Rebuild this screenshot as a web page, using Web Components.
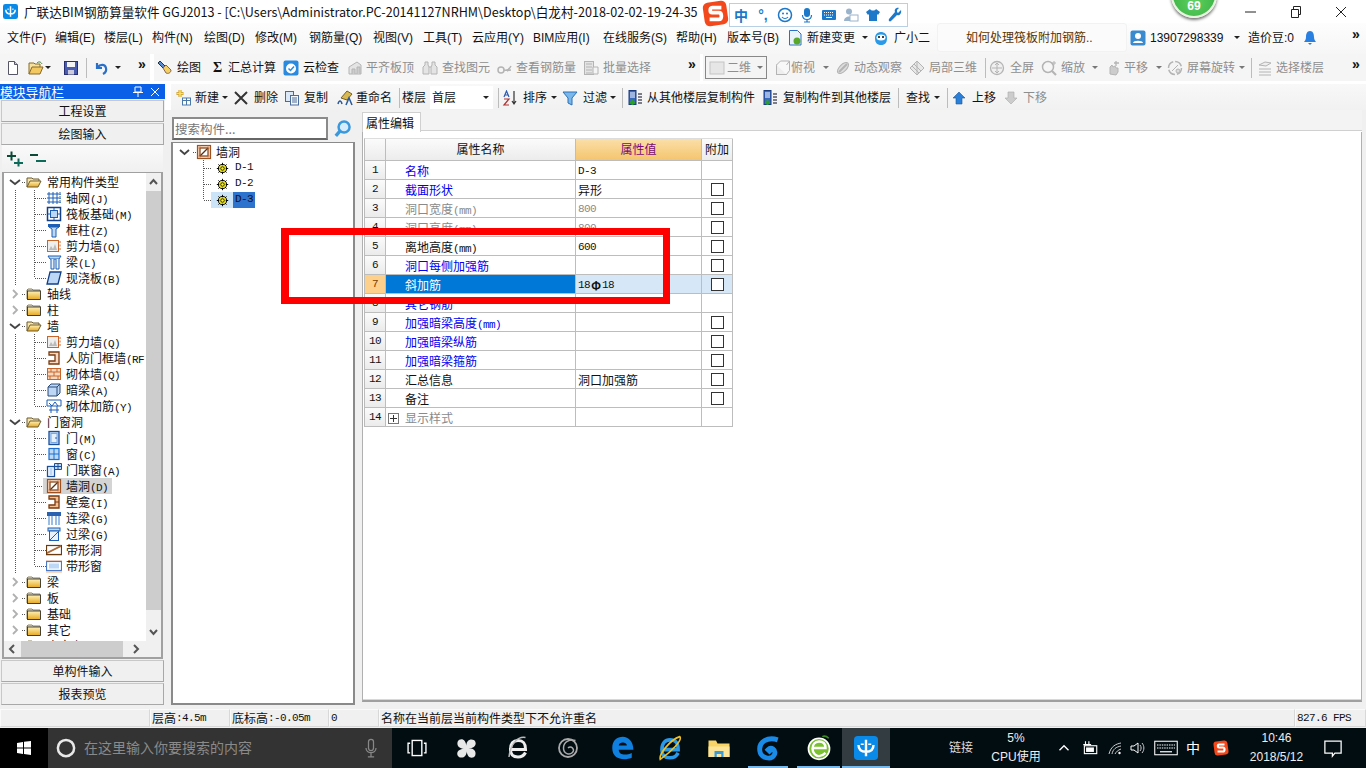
<!DOCTYPE html>
<html lang="zh"><head><meta charset="utf-8"><title>GGJ2013</title>
<style>html,body{margin:0;padding:0;background:#fff;overflow:hidden}</style></head>
<body>
<gl-app>
  <gl-title></gl-title>
  <gl-row name="menu"></gl-row>
  <gl-row name="tools"></gl-row>
  <gl-main>
    <gl-nav slot="nav">
      <gl-navbtn slot="top">工程设置</gl-navbtn>
      <gl-navbtn slot="top">绘图输入</gl-navbtn>
      <gl-navbtn slot="bottom">单构件输入</gl-navbtn>
      <gl-navbtn slot="bottom">报表预览</gl-navbtn>
    </gl-nav>
    <gl-row slot="bar" name="edit"></gl-row>
    <gl-list slot="list"></gl-list>
    <gl-props slot="props"></gl-props>
  </gl-main>
  <gl-status></gl-status>
  <gl-row name="task"></gl-row>
  <gl-overlay slot="over"></gl-overlay>
</gl-app>
<script>
const CJK='"Noto Sans CJK SC","Noto Sans",sans-serif';
const UI='"Liberation Sans","Noto Sans CJK SC",sans-serif';
const SHARED=`.l{font:11px/12px "Liberation Mono",monospace;letter-spacing:-.6px}*{box-sizing:border-box}`;
const m=s=>s.replace(/[\x20-\x7e]+/g,x=>`<span class="l">${x}</span>`);
const fold=(open)=>`<defs><linearGradient id="f" x1="0" y1="0" x2="0" y2="1"><stop offset="0" stop-color="#fff2b8"/><stop offset="1" stop-color="#e8a820"/></linearGradient></defs>`+(open?`<path d="M1 13V4h5l1 1h6v2" fill="#f6e4a8" stroke="#6a5a30"/><path d="M1 13l3-6h11l-3 6z" fill="url(#f)" stroke="#6a5a30"/>`:`<path d="M1 4l1-1h4l1 1h7v9H1z" fill="#e8e0c0" stroke="#8a8060"/><rect x="1.500" y="5" width="13" height="8.500" fill="url(#f)" stroke="#222" stroke-width=".8"/>`);
const B='#1c5fb4',LB='#bcd8f6',OR='#c8662a',LO='#f8d8c0';
const G='#b4b4b4',LG='#e4e4e4';
const I={
 folderOpen:fold(1),folder:fold(0),
 grid:`<path d="M3 2v12M7 2v12M11 2v12M1 4h14M1 8h14M1 12h14" stroke="${B}" fill="none"/><path d="M14 2v12" stroke="${B}" stroke-dasharray="1 1"/>`,
 raft:`<rect x="1.500" y="1.500" width="13" height="13" fill="#fff" stroke="#123f88" stroke-width="1.500"/><rect x="4.500" y="4.500" width="7" height="7" fill="${LB}" stroke="${B}"/><path d="M8 2v3M8 11v3M2 8h3M11 8h3" stroke="${B}"/>`,
 col:`<path d="M2 2h12v3H2z" fill="${B}"/><path d="M3 5h10l-3 2v8H6V7z" fill="${LB}" stroke="${B}"/>`,
 shear:`<rect x="1.500" y="2.500" width="11" height="11" fill="#eee" stroke="${OR}"/><path d="M3 12l2-4 2 3 2-5 2 6z" fill="#bbb"/><path d="M14 3v10" stroke="${OR}" stroke-dasharray="2 1.500"/>`,
 beam:`<path d="M2 2h13l-2 3H4z" fill="${LB}" stroke="${B}"/><path d="M5 5v10h3V5M10 5v10h3V5" fill="#e8f2fc" stroke="${B}"/>`,
 slab:`<path d="M4 2h11l-3 12H1z" fill="${LB}" stroke="#123f88" stroke-width="1.300"/>`,
 rf:`<path d="M3 2h10v12H3v-3h6V5H3z" fill="${LO}" stroke="#7a3a10" stroke-width="1.300"/>`,
 brick:`<rect x="1.500" y="2.500" width="13" height="11" fill="${LO}" stroke="${OR}"/><path d="M1 6h14M1 10h14M5 3v3M11 3v3M8 6v4M4 10v4M12 10v4" stroke="${OR}" fill="none"/>`,
 hidden:`<path d="M2 5l3-3h9v9l-3 3H2z" fill="${LB}" stroke="#2a4a78"/><path d="M2 5h9v9M11 5l3-3" fill="none" stroke="#2a4a78"/>`,
 rein:`<path d="M1 2h14v6H1z" fill="#fff" stroke="${B}"/><path d="M3 5l3 3 3-4 3 4" stroke="${B}" fill="none"/><path d="M5 8v7M11 8v7M3 12h10" stroke="${B}"/>`,
 door:`<rect x="3" y="1.500" width="10" height="13" fill="${LB}" stroke="#1b4f9c" stroke-width="1.300"/><rect x="5" y="3.500" width="6" height="9" fill="#e6f0fb" stroke="#7aa8e0"/><circle cx="10" cy="8" r=".8" fill="#1b4f9c"/>`,
 win:`<rect x="3" y="2.500" width="10" height="11" fill="${LB}" stroke="#1b6fd0" stroke-width="1.200"/><path d="M8 3v10M3 8h10" stroke="#1b6fd0"/>`,
 doorwin:`<rect x="1.500" y="4.500" width="7" height="10" fill="#fff" stroke="#1b4f9c" stroke-width="1.300"/><rect x="3.500" y="6" width="3" height="7" fill="${LB}"/><path d="M8.500 1.500h7v6h-7z" fill="${LB}" stroke="#1b4f9c"/><path d="M12 2v5M9 4.500h6" stroke="#1b4f9c"/>`,
 hole:`<rect x="1.500" y="1.500" width="13" height="13" fill="${LO}" stroke="#9a5020" stroke-width="1.200"/><rect x="4" y="4" width="8" height="8" fill="#fff" stroke="#5a3010"/><path d="M4 12l8-8" stroke="#5a3010" stroke-width="1.200"/><path d="M4 1v14M12 1v14M1 4h14M1 12h14" stroke="${OR}" stroke-width=".5"/>`,
 niche:`<path d="M3 2h10v12H3v-3h6V5H3z" fill="#f6c090" stroke="#7a3a10" stroke-width="1.300"/><path d="M9 8h4" stroke="#7a3a10"/>`,
 lintel:`<rect x="1" y="2" width="14" height="4" fill="#2a62b0"/><path d="M3 6v9M6 6v9M10 6v9M13 6v9" stroke="#7aa8e0" stroke-width="1.500"/>`,
 over:`<rect x="2" y="2" width="12" height="3" fill="${LB}" stroke="${B}"/><rect x="3.500" y="5" width="9" height="9.500" fill="#e8f2fc" stroke="${B}"/><path d="M4 14l8-8" stroke="${B}"/>`,
 strip:`<rect x="0" y="3" width="16" height="11" fill="${LO}"/><rect x=".5" y="3.500" width="15" height="9" fill="#fff" stroke="#6a3a10" stroke-width="1.200"/><path d="M1 12l14-7v-2L1 10z" fill="#a56a3a"/>`,
 stripw:`<rect x="0" y="2" width="16" height="13" fill="${LO}"/><rect x=".5" y="3.500" width="15" height="9" fill="#fff" stroke="#4a7ac8" stroke-width="1.200"/><rect x="3" y="5.500" width="10" height="5" fill="${LB}"/>`,
 gear:`<circle cx="8" cy="8" r="5" fill="#f8f020" stroke="#000" stroke-width="1.200"/><circle cx="8" cy="8" r="2.200" fill="#f8f020" stroke="#000"/><path d="M8 1v3M8 12v3M1 8h3M12 8h3M3 3l2 2M11 11l2 2M13 3l-2 2M5 11l-2 2" stroke="#000" stroke-width="1.200"/>`,
 search:`<circle cx="9.500" cy="6.500" r="4" fill="#d4ecfc" stroke="#3a98dc" stroke-width="1.800"/><path d="M6.500 9.500l-3 3.500" stroke="#3a98dc" stroke-width="2.400"/>`,
 plusplus:`<path d="M0 5h9M4.500 .5v9" stroke="#0c4a38" stroke-width="2"/><path d="M7 12h9M11.500 7.500v8" stroke="#0c6a58" stroke-width="2"/>`,
 minmin:`<path d="M0 4h8" stroke="#0c4a38" stroke-width="2"/><path d="M6 10h10" stroke="#0c6a58" stroke-width="2"/>`,
 new:`<path d="M3.500 1.500h6l3 3v10h-9z" fill="#fff" stroke="#556"/><path d="M9.500 1.500v3h3" fill="#ccd" stroke="#556"/>`,
 open:`<path d="M1 14V3h5l1 1h5v3" fill="#f6e0a0" stroke="#8a6a20"/><path d="M1 14l3-7h11l-3 7z" fill="#f4c860" stroke="#8a6a20"/><path d="M9 3c2-2 4-1 5 1" fill="none" stroke="#3a7a3a"/>`,
 save:`<rect x="1.500" y="1.500" width="13" height="13" fill="#4a5cb0" stroke="#263070"/><rect x="4" y="2" width="8" height="5" fill="#f4f4f4"/><rect x="5" y="10" width="6" height="4.500" fill="#ccd"/>`,
 undo:`<path d="M4 3v5h5M4.500 7.500C7 4 12 4 13 8c.6 2.500-1 5-3 6" fill="none" stroke="#2a70c8" stroke-width="2.200"/>`,
 brush:`<path d="M3 1l5 5-2 2-5-5z" fill="#5a8ad0" stroke="#234"/><path d="M6 8l3-3 5 5c0 3-3 4-5 3z" fill="#f4d060" stroke="#865"/>`,
 cloud:`<rect x=".5" y=".5" width="15" height="15" rx="2" fill="#2a8ae0"/><circle cx="8" cy="8.500" r="5" fill="#fff"/><path d="M5.500 8.500l2 2 3.500-4" fill="none" stroke="#2a8ae0" stroke-width="1.500"/>`,
 g1:`<path d="M2 14V7l8-5 4 3v9z" fill="${LG}" stroke="${G}"/><path d="M5 14V9h3v5M10 14V7h3v7" fill="#ccc" stroke="${G}"/>`,
 g2:`<path d="M3 2h3v3l1 2v7H1V7l2-2zM10 2h3v3l2 2v7H9V7l1-2z" fill="${LG}" stroke="${G}"/><path d="M7 7h2" stroke="${G}"/>`,
 g3:`<circle cx="4" cy="10" r="3" fill="none" stroke="${G}" stroke-width="1.500"/><path d="M7 10c3 1 5 0 7-4M10 11c2-1 4-1 4-1" fill="none" stroke="${G}" stroke-width="1.500"/>`,
 g4:`<rect x="1.500" y="1.500" width="9" height="13" fill="${LG}" stroke="${G}"/><path d="M3 4h6M3 7h6M3 10h6M3 13h6" stroke="${G}"/><path d="M10 7h5v7h-5z" fill="#f4f4f4" stroke="${G}"/>`,
 g5:`<rect x="1.500" y="5" width="10" height="9.500" fill="#eee" stroke="${G}"/><path d="M1.500 5l4-4h9v9.500l-3 4M11.500 5l3-4" fill="#f8f8f8" stroke="${G}"/>`,
 g6:`<ellipse cx="8" cy="8" rx="7" ry="3.500" transform="rotate(-45 8 8)" fill="#ddd" stroke="${G}"/><path d="M4 12l8-8" stroke="${G}" stroke-width="2"/>`,
 g7:`<path d="M8 1l7 7-7 7-7-7z" fill="#e8e8e8" stroke="${G}"/><path d="M5 4l7 7M8 1v14M3 6l7 7" stroke="${G}"/>`,
 g8:`<circle cx="8" cy="8" r="6.500" fill="#f0f0f0" stroke="${G}" stroke-width="1.300"/><path d="M8 3v10M3 8h10M8 3l-2 2M8 3l2 2M8 13l-2-2M8 13l2-2" fill="none" stroke="${G}"/>`,
 g9:`<circle cx="7" cy="7" r="5.500" fill="#f6f6f6" stroke="${G}" stroke-width="1.500"/><path d="M11 11l4 4" stroke="${G}" stroke-width="2.200"/><path d="M13 1v4M11 3h4" stroke="${G}"/>`,
 g10:`<path d="M5 14V7l2-2 1 2 2-1 1 2 2 0v4l-2 3z" fill="#ccc" stroke="${G}"/><path d="M11 1v5M9 3h5" stroke="${G}" stroke-width="1.300"/>`,
 g11:`<circle cx="8" cy="8" r="6.500" fill="#f4f4f4" stroke="${G}" stroke-width="1.500" stroke-dasharray="8 2"/><path d="M5 11l6-6" stroke="${G}"/><circle cx="11" cy="11" r="2" fill="#ddd" stroke="${G}"/>`,
 g12:`<path d="M2 5l6-3 6 1-5 3zM2 9h12M2 12h12M2 15h12" fill="#eee" stroke="${G}"/>`,
 combo2d:`<rect x="1" y="2" width="14" height="12" fill="#e6e6e6" stroke="#c4c4c4"/>`,
 newb:`<path d="M5 0v7M1.500 3.500h7" stroke="#c89820" stroke-width="3"/><path d="M5 0v7M1.500 3.500h7" stroke="#f8e070" stroke-width="1.500"/><rect x="7.500" y="8" width="8" height="7" fill="#fff" stroke="#4a78a8"/><path d="M7.500 10.500h8M11.500 8v7" stroke="#4a78a8"/>`,
 del:`<path d="M2 2l12 12M14 2L2 14" stroke="#333" stroke-width="2"/>`,
 copy:`<rect x="1.500" y="1.500" width="8" height="10" fill="#dce8f6" stroke="#4a6a9a"/><rect x="6.500" y="5.500" width="8" height="9.500" fill="#f4f8fc" stroke="#4a6a9a"/><path d="M8 8h5M8 10h5M8 12h5" stroke="#4a6a9a"/>`,
 rename:`<path d="M4 8l6-7 5 3-5 6z" fill="#d8b850" stroke="#786020"/><path d="M1 14c1-4 3-4 4 0M9 15l3-7 3 7" fill="none" stroke="#2a5a9a" stroke-width="1.500"/>`,
 sort:`<path d="M12 1v13M10 11l2 3 2-3" fill="none" stroke="#333" stroke-width="1.200"/><path d="M2 7l2.500-6L7 7M3 5h3" fill="none" stroke="#2a5ab0" stroke-width="1.200"/><path d="M2 9h5l-5 6h5" fill="none" stroke="#b03030" stroke-width="1.200"/>`,
 funnel:`<path d="M1 2h14l-5 6v7l-4-2V8z" fill="#7ab8ec" stroke="#2a70b8"/>`,
 cpy1:`<rect x="2" y="0.500" width="7" height="14" fill="#3a6ac0" stroke="#1a3a80"/><path d="M3 3h5M3 5h5M3 7h5" stroke="#fff"/><path d="M11 4h4M11 7h4M11 10h4M11 13h4" stroke="#556" stroke-width="1.500"/><path d="M5.500 10v5M3 12.500h5" stroke="#2aa02a" stroke-width="2"/>`,
 up:`<path d="M8 2l6 6h-3v6H5V8H2z" fill="#2a80d8" stroke="#1a58a0" stroke-width=".6"/>`,
 down:`<path d="M8 14l6-6h-3V2H5v6H2z" fill="#ccc" stroke="#aaa" stroke-width=".6"/>`,
 doc:`<path d="M2.500 .5h8l3.500 3.500v11H2.500z" fill="#eaf3fc" stroke="#2a70c8"/><circle cx="10" cy="11" r="3.500" fill="#5aa82a"/>`,
 bot:`<path d="M2 8c0-8 12-8 12 0 0 6-3 7-6 7s-6-1-6-7z" fill="#2a9ae8"/><ellipse cx="8" cy="7.500" rx="4.500" ry="3" fill="#fff"/><circle cx="6" cy="7" r="1" fill="#000"/><circle cx="10" cy="7" r="1" fill="#000"/>`,
 user:`<rect x=".5" y=".5" width="15" height="15" rx="2" fill="#3a8ad0"/><circle cx="8" cy="6" r="3" fill="#fff"/><path d="M3 13c0-3 10-3 10 0z" fill="#fff"/>`,
 bell:`<path d="M8 1c3 0 4 3 4 6 0 2 1 4 2 5H2c1-1 2-3 2-5 0-3 1-6 4-6z" fill="#2a80e0"/><path d="M6 13h4l-2 2z" fill="#2a80e0"/>`,
 winlogo:`<path d="M1 3l6-1v5.500H1zM8 1.800L15 1v6.500H8zM1 8.500h6V14l-6-1zM8 8.500h7V15l-7-1z" fill="#fff"/>`,
 cortana:`<circle cx="8" cy="8" r="6.500" fill="none" stroke="#e8e8e8" stroke-width="2"/>`,
 mic:`<rect x="6" y="1" width="4" height="9" rx="2" fill="none" stroke="#888"/><path d="M4 8c0 5 8 5 8 0M8 12v3M5.500 15h5" fill="none" stroke="#888"/>`,
 taskview:`<rect x="4.500" y="2.500" width="7" height="11" fill="none" stroke="#fff"/><path d="M3 4.500H1.500v7H3M13 4.500h1.500v7H13" fill="none" stroke="#fff"/>`,
 pin:`<path d="M8 8C2 9 1 5 2 3s6-3 6 5zM8 8c-1-6 3-7 5-6s3 6-5 6zM8 8c6-1 7 3 6 5s-6 3-6-5zM8 8c1 6-3 7-5 6S0 8 8 8z" fill="#e8e8e8"/>`,
 ie1:`<path d="M2 9h11c0-5-2-6-5-6S3 5 3 9s2 5 5 5 4-1 5-3" fill="none" stroke="#eee" stroke-width="2"/><path d="M13 1c-5-1-10 4-11 13" fill="none" stroke="#bbb"/>`,
 swirl:`<circle cx="8" cy="8" r="6" fill="none" stroke="#aaa" stroke-width="1.200"/><path d="M13 3c-4-1-8 1-8 5s4 5 6 3-1-5-3-3" fill="none" stroke="#aaa"/>`,
 edge:`<path d="M2 8c0-5 3-7 6.500-7S15 4 15 9H6c0 3 4 4 8 2v3c-5 2-12 1-12-6zM6 6.500h5C11 4 6 4 6 6.500z" fill="#1080e0"/>`,
 ie:`<path d="M2 9h11c0-5-2-6-5-6S3 5 3 9s2 5 5 5 4-1 5-3" fill="none" stroke="#2a9ae8" stroke-width="2.200"/><path d="M14 1c2 2-5 9-12 14-1-3 6-12 12-14z" fill="none" stroke="#f0c020"/>`,
 fold:`<path d="M1 3h5l1 2h8v9H1z" fill="#f8d468"/><path d="M1 7h14v7H1z" fill="#fce49a"/><path d="M5 14v-4h6v4h-1.500v-2h-3v2z" fill="#3a9ad8"/>`,
 gapp:`<path d="M14 3C8 1 2 4 3 10c.5 4 7 6 9 2 1-3-2-5-4-3l2 2" fill="none" stroke="#1a8ae8" stroke-width="3"/>`,
 gie:`<circle cx="8" cy="8.500" r="6.500" fill="#7ac030" stroke="#fff"/><path d="M4 8h8c0-3-1.500-4-4-4s-4 2-4 4.500S6 13 8 13s3-1 4-2" fill="none" stroke="#fff" stroke-width="1.500"/><path d="M10 1c2-1 3 0 4 1" stroke="#3a8a20" fill="none"/>`,
 glad:`<rect x="0" y="0" width="16" height="16" rx="2.500" fill="#0a8ae8"/><path d="M8 2.500v11M3 6c0 3.500 2.500 4.500 5 4.500s5-1 5-4.500" fill="none" stroke="#fff" stroke-width="1.600"/><path d="M4.500 5.500h2M9.500 5.500h2" stroke="#fff"/>`,
 chev:`<path d="M4 10l4-4 4 4" fill="none" stroke="#fff" stroke-width="1.200"/>`,
 batt:`<rect x="3" y="6" width="11" height="7" fill="none" stroke="#fff"/><rect x="4.500" y="7.500" width="7" height="4" fill="#fff"/><path d="M4 5V2M7 5V2M2 5h7" stroke="#fff"/>`,
 wifi:`<path d="M2 14c2-8 7-10 12-11M5 14c1-5 4-7 9-8M8 14c1-2 3-4 6-5" fill="none" stroke="#ccc"/><circle cx="12.500" cy="13" r="1.200" fill="#fff"/>`,
 sound:`<path d="M2 6h3l4-3v10l-4-3H2z" fill="none" stroke="#fff"/><path d="M11 5c1.500 2 1.500 4 0 6M13 3c2.500 3 2.500 7 0 10" fill="none" stroke="#ccc"/>`,
 kbd:`<rect x=".5" y="3.500" width="15" height="9" fill="none" stroke="#fff" stroke-width=".7"/><path d="M2 6h12M2 8h12" stroke="#fff" stroke-dasharray="1 .6" stroke-width=".8"/><path d="M4 10.500h8" stroke="#fff" stroke-width=".8"/>`,
 sogou:`<rect x="1" y="1" width="14" height="14" rx="3" fill="#f2481c" transform="rotate(-8 8 8)"/><path d="M11.500 4.500H6C4.500 4.500 4.500 7.500 6 7.500h4c2 0 2 4 0 4H4.500" fill="none" stroke="#fff" stroke-width="2.200"/>`,
 notif:`<path d="M1.500 2.500h13v9.500H9.500L7.500 14.500V12H1.500z" fill="none" stroke="#fff"/>`,
 smile:`<circle cx="8" cy="8" r="6.500" fill="none" stroke="#1c78c8" stroke-width="1.500"/><circle cx="6" cy="6.500" r="1" fill="#1c78c8"/><circle cx="10" cy="6.500" r="1" fill="#1c78c8"/><path d="M5 10c1.500 2 4.500 2 6 0" fill="none" stroke="#1c78c8" stroke-width="1.200"/>`,
 micb:`<rect x="5" y="1" width="6" height="9" rx="3" fill="#1c78c8"/><path d="M3.500 8c0 6 9 6 9 0M8 12.500V15M5 15h6" fill="none" stroke="#1c78c8" stroke-width="1.200"/>`,
 kbb:`<rect x="1" y="3" width="14" height="10" rx="1" fill="#1c78c8"/><path d="M3 5.500h10M3 8h10" stroke="#fff" stroke-dasharray="1 1"/><path d="M5 10.500h6" stroke="#fff"/>`,
 pers:`<circle cx="6" cy="4.500" r="3" fill="#9ab4cc"/><path d="M1 14c0-6 10-6 10 0z" fill="#9ab4cc"/><rect x="7" y="8" width="8" height="6" fill="#fff" stroke="#9ab4cc"/>`,
 shirt:`<path d="M5 2L1 5l2 3 1-1v7h8V7l1 1 2-3-4-3c-1 2-5 2-6 0z" fill="#1c78c8"/>`,
 wrench:`<path d="M14 3l-3 3-1-1 0-2 2-2c-3-1-5 2-4 4L2 12c-1 2 1 3 2 2l6-6c2 1 5-1 4-5z" fill="#1c78c8"/>`,
 restore:`<path d="M3.500 5.500h7v8h-7zM5.500 5.500v-3h7v8h-2" fill="none" stroke="#222"/>`,
 closex:`<path d="M3 3l10 10M13 3L3 13" stroke="#222"/>`,
 minus:`<path d="M2 8h11" stroke="#222"/>`,
};
class Base extends HTMLElement{
  shadow(html){if(!this.shadowRoot)this.attachShadow({mode:'open'});this.shadowRoot.innerHTML=html;}
}
class GlIcon extends Base{connectedCallback(){const s=this.getAttribute('s')||16;
  this.shadow(`<style>:host{display:inline-flex;flex:none;width:${s}px;height:${s}px}svg{display:block}</style><svg viewBox="0 0 16 16" width="${s}" height="${s}">${I[this.getAttribute('n')]||''}</svg>`);}}
customElements.define('gl-icon',GlIcon);
const ic=(n,s=16)=>`<gl-icon n="${n}" s="${s}"></gl-icon>`;

const ROWS={
 menu:{h:31,pb:2,base:0,bg:'linear-gradient(#fdfdfd,#f6f6f6)',items:[
  [7,'t','文件(F)'],[55,'t','编辑(E)'],[104,'t','楼层(L)'],[152,'t','构件(N)'],[204,'t','绘图(D)'],[255,'t','修改(M)'],[309,'t','钢筋量(Q)'],[373,'t','视图(V)'],[423,'t','工具(T)'],[472,'t','云应用(Y)'],[533,'t','BIM应用(I)'],[603,'t','在线服务(S)'],[676,'t','帮助(H)'],[727,'t','版本号(B)'],
  [787,'i','doc'],[807,'t','新建变更'],[861,'a'],[873,'i','bot'],[894,'t','广小二'],
  [937,'t','如何处理筏板附加钢筋..',{st:'background:#fbfbfb;color:#5a3200;padding-left:28px;border-radius:3px;border:1px solid #f2f2f2'}],
  [1127,'t','',{w:4}],[1130,'i','user'],[1150,'t','13907298339'],[1233,'a'],[1248,'t','造价豆:0'],[1302,'i','bell'],[1352,'m']]},
 tools:{h:27,base:0,mb:3,bg:'linear-gradient(90deg,#f5f5f5 150px,#fff 150px 154px,#f5f5f5 154px 700px,#fff 700px 703px,#f5f5f5 703px)',items:[
  [5,'i','new'],[28,'i','open'],[44,'a'],[63,'i','save'],[85,'s'],[93,'i','undo'],[114,'a'],[138,'m'],
  [157,'i','brush'],[177,'t','绘图'],[210,'tb','Σ'],[228,'t','汇总计算'],[283,'i','cloud'],[303,'t','云检查'],
  [347,'i','g1'],[366,'tg','平齐板顶'],[422,'i','g2'],[442,'tg','查找图元'],[497,'i','g3'],[516,'tg','查看钢筋量'],[583,'i','g4'],[603,'tg','批量选择'],[688,'m'],
  [705,'c','二维'],[775,'i','g5'],[791,'tg','俯视'],[822,'ag'],[835,'i','g6'],[854,'tg','动态观察'],[909,'i','g7'],[929,'tg','局部三维'],[984,'s'],
  [989,'i','g8'],[1010,'tg','全屏'],[1041,'i','g9'],[1061,'tg','缩放'],[1091,'ag'],[1105,'i','g10'],[1124,'tg','平移'],[1155,'ag'],[1167,'i','g11'],[1187,'tg','屏幕旋转'],[1238,'ag'],[1250,'s'],[1257,'i','g12'],[1276,'tg','选择楼层'],[1352,'m']]},
 edit:{h:26,pt:1,base:171,bg:'linear-gradient(#f8f8f8,#f1f1f1)',items:[
  [175,'i','newb'],[195,'t','新建'],[221,'a'],[233,'i','del'],[254,'t','删除'],[284,'i','copy'],[304,'t','复制'],[337,'i','rename'],[356,'t','重命名'],[398,'s'],[402,'t','楼层'],
  [430,'k','首层'],[497,'s'],[502,'i','sort'],[523,'t','排序'],[550,'a'],[562,'i','funnel'],[583,'t','过滤'],[609,'a'],[621,'s'],[627,'i','cpy1'],[647,'t','从其他楼层复制构件'],[762,'i','cpy1'],[783,'t','复制构件到其他楼层'],[897,'s'],[906,'t','查找'],[933,'a'],[946,'s'],[951,'i','up'],[972,'t','上移'],[1003,'i','down'],[1023,'tg','下移']]},
 task:{h:40,base:0,bg:'#020d12',color:'#fff',items:[
  [0,'ic','winlogo',{s:16,st:'background:#000;justify-content:center'}],
  [48,'ic','cortana',{s:20,st:'background:#333;padding-left:8px'}],
  [84,'t','在这里输入你要搜索的内容',{st:'background:#333;color:#8a8a8a;font-size:14px'}],
  [361,'ic','mic',{s:20,st:'background:#333'}],
  [392,'f'],[406,'ic','taskview',{s:22}],[455,'ic','pin',{s:23}],[506,'ic','ie1',{s:24}],[556,'ic','swirl',{s:24}],[609,'ic','edge',{s:26}],[657,'ic','ie',{s:26}],[707,'ic','fold',{s:24}],
  [748,'ic','gapp',{s:26,st:'justify-content:center;box-shadow:inset 0 -2px #76b9ed'}],[788,'f'],
  [797,'ic','gie',{s:26,st:'justify-content:center;box-shadow:inset 0 -2px #76b9ed'}],[840,'f'],
  [842,'ic','glad',{s:24,st:'justify-content:center;background:#333c40;box-shadow:inset 0 -2px #76b9ed'}],
  [890,'f'],[949,'t','链接',{st:'color:#ddd'}],[985,'two','5%|CPU使用',{}],[1047,'f'],
  [1055,'ic','chev',{s:18}],[1081,'ic','batt',{s:18}],[1107,'ic','wifi',{s:16}],[1129,'ic','sound',{s:16}],[1154,'ic','kbd',{s:24}],[1186,'t','中',{st:'font-size:14px'}],[1213,'ic','sogou',{s:16}],
  [1235,'two','10:46|2018/5/12',{}],[1318,'ic','notif',{s:20,st:'padding-left:5px'}]]}
};
class GlRow extends Base{connectedCallback(){
  const d=ROWS[this.getAttribute('name')];
  const it=d.items;let h='';
  it.forEach((c,i)=>{
    const[x,k,v,o={}]=c;const nx=i+1<it.length?it[i+1][0]:1366;const w=nx-x;
    let inner='',cl='cell';
    if(k==='t')inner=`<span>${v}</span>`;
    if(k==='tg'){inner=`<span>${v}</span>`;cl+=' gray';}
    if(k==='tb'){inner=`<span style="font:bold 14px 'Liberation Serif',serif;margin-left:3px">${v}</span>`;}
    if(k==='i')inner=ic(v);
    if(k==='ic')inner=ic(v,o.s);
    if(k==='a')inner=`<span class="arr"></span>`;
    if(k==='ag')inner=`<span class="arr g"></span>`;
    if(k==='s')inner=`<span class="sep"></span>`;
    if(k==='m')inner=`<span class="more">»</span>`;
    if(k==='c')inner=`<span class="combo">${ic('combo2d')}<span>${v}</span><span class="arr g" style="margin-left:auto"></span></span>`;
    if(k==='k')inner=`<span class="kcombo"><span>${v}</span><span class="arr" style="margin-left:auto"></span></span>`;
    if(k==='two'){const[a,b]=v.split('|');inner=`<span class="two"><span>${a}</span><span>${b}</span></span>`;}
    h+=`<div class="${cl}" style="width:${w}px;${o.st||''}">${inner}</div>`;
  });
  this.shadow(`<style>${SHARED}
  :host{display:flex;flex:none;height:${d.h}px;box-sizing:border-box;margin-bottom:${d.mb||0}px;background:${d.bg};color:${d.color||'#111'};font:12px/16px ${UI};padding:${d.pt||0}px 0 ${d.pb||0}px ${it[0][0]-d.base}px;overflow:hidden}
  .cell{flex:none;height:100%;display:flex;align-items:center;white-space:nowrap}
  .gray{color:#8e8e8e}
  .arr{width:0;height:0;border:3px solid transparent;border-top:3px solid #222;border-bottom:0;margin-left:1px}
  .arr.g{border-top-color:#777}
  .sep{width:1px;height:20px;background:#bcbcbc;margin-left:1px}
  .more{font:bold 14px/14px "Liberation Sans",sans-serif;margin-top:-8px}
  .combo{width:62px;height:23px;border:1px solid #888;display:flex;align-items:center;gap:2px;color:#8e8e8e;padding:0 3px;background:#f4f4f4}
  .kcombo{width:63px;height:23px;display:flex;align-items:center;background:#fff;padding:0 4px 0 2px}
  .two{display:flex;flex-direction:column;width:100%;align-items:center;gap:4px;line-height:15px;color:#eee}
  </style>${h}`);
}}
customElements.define('gl-row',GlRow);

class GlApp extends Base{connectedCallback(){
  this.shadow(`<style>:host{display:flex;flex-direction:column;width:1366px;height:768px;position:relative;overflow:hidden;background:#fff;font:12px/16px ${CJK};color:#111}</style><slot></slot><slot name="over"></slot>`);
}}
customElements.define('gl-app',GlApp);

class GlTitle extends Base{connectedCallback(){
  this.shadow(`<style>:host{display:flex;flex:none;height:23px;align-items:center;background:#fff;font:12.600px/16px ${CJK};color:#111}
  .t{flex:none;width:1240px;white-space:nowrap;margin-left:3px;display:flex;gap:6px;align-items:center}
  .c{flex:none;width:41px;display:flex;justify-content:center}</style>
  <div class="t">${ic('glad',15)}<span>广联达BIM钢筋算量软件 GGJ2013 - [C:\\Users\\Administrator.PC-20141127NRHM\\Desktop\\白龙村-2018-02-02-19-24-35</span></div>
  <div class="c" style="margin-left:-13px">${ic('minus')}</div><div class="c" style="margin-left:4px">${ic('restore')}</div><div class="c" style="margin-left:4px">${ic('closex')}</div>`);
}}
customElements.define('gl-title',GlTitle);

class GlMain extends Base{connectedCallback(){
  this.shadow(`<style>:host{display:grid;flex:none;height:624px;grid-template-columns:165px 6px 184px 7px 1000px 4px;grid-template-rows:26px 1fr;background:#f0f0f0}
  ::slotted([slot=nav]){grid-row:1/3;grid-column:1}
  ::slotted([slot=bar]){grid-row:1;grid-column:3/7;}
  ::slotted([slot=list]){grid-row:2;grid-column:3}
  ::slotted([slot=props]){grid-row:2;grid-column:5}
  .w{grid-row:1;grid-column:2;background:#fff}
  </style><div class="w"></div><slot name="nav"></slot><slot name="bar"></slot><slot name="list"></slot><slot name="props"></slot>`);
}}
customElements.define('gl-main',GlMain);

class GlNavBtn extends Base{connectedCallback(){
  this.shadow(`<style>:host{display:flex;box-sizing:border-box;align-items:center;justify-content:center;height:22px;margin:0 1px 1px;background:#f0f0f0;border:1px solid #a8a8a8;border-top-color:#c8c8c8;border-left-color:#c8c8c8;font:12px/16px ${CJK};color:#111}</style><slot></slot>`);
}}
customElements.define('gl-navbtn',GlNavBtn);

const NAV=[
 [0,'o','folderOpen','常用构件类型',1],[1,'','grid','轴网(J)',1],[1,'','raft','筏板基础(M)',1],[1,'','col','框柱(Z)',1],[1,'','shear','剪力墙(Q)',1],[1,'','beam','梁(L)',1],[1,'e','slab','现浇板(B)',0],
 [0,'c','folder','轴线'],[0,'c','folder','柱'],
 [0,'o','folderOpen','墙',1],[1,'','shear','剪力墙(Q)',1],[1,'','rf','人防门框墙(RF',1],[1,'','brick','砌体墙(Q)',1],[1,'','hidden','暗梁(A)',1],[1,'e','rein','砌体加筋(Y)',0],
 [0,'o','folderOpen','门窗洞',1],[1,'','door','门(M)',1],[1,'','win','窗(C)',1],[1,'','doorwin','门联窗(A)',1],[1,'','hole','墙洞(D)',1,1],[1,'','niche','壁龛(I)',1],[1,'','lintel','连梁(G)',1],[1,'','over','过梁(G)',1],[1,'','strip','带形洞',1],[1,'e','stripw','带形窗',0],
 [0,'c','folder','梁'],[0,'c','folder','板'],[0,'c','folder','基础'],[0,'c','folder','其它'],[0,'c','folder','自定义']];
const dash='stroke="#555" stroke-dasharray="1 1" fill="none"';
const chev=k=>k==='o'?`<path d="M10 6l5 4 5-4" fill="none" stroke="#444" stroke-width="1.800"/>`:`<path d="M13 4l4 4-4 4" fill="none" stroke="#b0b0b0" stroke-width="1.800"/>`;
function navRow(r){
  const[l,k,i,t,more,sel]=r;
  let svg;
  if(l===0)svg=`<svg width="26" height="16">${chev(k)}<path d="M22 8.500h4" ${dash}/></svg>`;
  else svg=`<svg width="46" height="16"><path d="M15.500 0v16" ${dash}/><path d="M34.500 0v${k==='e'?8:16}M35 8.500h11" ${dash}/></svg>`;
  return `<div class="row">${svg}<span class="ico ${sel?'sel':''}">${ic(i)}</span><span class="tx ${sel?'sel':''}" style="margin-left:${l?(sel?0:3):4}px">${m(t)}</span></div>`;
}
class GlNav extends Base{connectedCallback(){
  this.shadow(`<style>${SHARED}
  :host{display:flex;flex-direction:column;height:624px;background:#f0f0f0;overflow:hidden;font:12px/16px ${CJK};color:#111}
  .hd{height:15px;flex:none;background:#0a60e6;color:#fff;display:flex;align-items:center;margin-bottom:1px}
  .hd b{font-weight:400;flex:1;white-space:nowrap;font-size:12.800px;line-height:15px}
  .top{flex:none;height:45px}
  .tool{flex:none;height:27px;margin:0 2px;background:linear-gradient(#fafafa,#f0f0f0);display:flex;align-items:center;padding:0 0 0 5px;gap:3px}
  .box{flex:none;height:487px;width:161px;margin:0 2px;border:2px solid #a0a0a0;border-top-width:1px;display:grid;grid-template-columns:142px 15px;grid-template-rows:1fr 16px;background:#f0f0f0}
  .tree{background:#fff;overflow:hidden;padding-top:1px;min-width:0;min-height:0}
  .row{height:16px;display:flex;align-items:center;white-space:nowrap;margin-left:-4px}
  .ico{width:16px;height:16px;flex:none;display:flex}
  .tx{padding:0 1px}
  .ico.sel{background:#d4d4d4;box-shadow:-3px 0 #d4d4d4}.tx.sel{background:#d4d4d4;padding:0 4px}
  .vs{background:#f0f0f0;display:flex;flex-direction:column;align-items:center;min-height:0;overflow:hidden}
  .hs{background:#f0f0f0;display:flex;align-items:center;grid-column:1/3}
  .thumb{background:#cdcdcd;flex:none}
  .btm{flex:none;margin-top:1px}
  svg{flex:none;display:block}
  </style>
  <div class="hd"><b>模块导航栏</b><svg width="14" height="12"><path d="M4 1h6v5H4zM2 6.500h10M7 7v4" stroke="#fff" fill="none"/></svg><svg width="20" height="12"><path d="M6 2l8 8M14 2l-8 8" stroke="#fff" fill="none"/></svg></div>
  <div class="top"><slot name="top"></slot></div>
  <div class="tool">${ic('plusplus')}<span style="width:1px"></span>${ic('minmin')}</div>
  <div class="box"><div class="tree">${NAV.map(navRow).join('')}</div>
   <div class="vs"><svg width="15" height="18"><path d="M4 11l3.500-4 3.500 4" fill="none" stroke="#555" stroke-width="2"/></svg><div class="thumb" style="width:15px;height:419px"></div><svg width="15" height="30" style="margin-top:auto"><path d="M4 19l3.500 4 3.500-4" fill="none" stroke="#555" stroke-width="2"/></svg></div>
   <div class="hs"><svg width="17" height="16"><path d="M10 4l-4 4 4 4" fill="none" stroke="#555" stroke-width="2"/></svg><div class="thumb" style="width:102px;height:16px"></div><svg width="24" height="16"><path d="M11 4l4 4-4 4" fill="none" stroke="#555" stroke-width="2"/></svg></div>
  </div>
  <div class="btm"><slot name="bottom"></slot></div>`);
}}
customElements.define('gl-nav',GlNav);

class GlList extends Base{connectedCallback(){
  const lv=(t,sel,last)=>`<div class="row"><svg width="38" height="16"><path d="M30.500 0v${last?8:16}M31 8.500h7" ${dash}/></svg><span class="g ${sel?'s1':''}">${ic('gear',13)}</span><span class="t ${sel?'s2':''}">${m(t)}</span></div>`;
  this.shadow(`<style>${SHARED}
  :host{display:flex;flex-direction:column;height:598px;font:12px/16px ${CJK};color:#111;overflow:hidden}
  .s{height:32px;flex:none;display:flex;align-items:flex-end;padding:0 0 2px 1px;gap:2px}
  .in{width:156px;height:23px;border:2px solid #8a8a8a;background:#fff;border-bottom-color:#666;color:#777;padding:2px 1px;white-space:nowrap;font-size:12.500px}
  .tree{height:563px;border:2px solid #8a8a8a;border-top-width:1px;background:#fff;padding-top:1px;flex:none}
  .row{display:flex;align-items:center;height:16px;white-space:nowrap}
  .g{width:22px;height:16px;display:flex;justify-content:center;align-items:center;flex:none}
  .s1{background:#cce4f7}.t{padding:0 0 2px 2px;width:22px;height:16px;display:flex;align-items:center;text-align:left}.s2{background:#2b73cc}
  svg{flex:none}
  </style>
  <div class="s"><div class="in">搜索构件...</div><span style="margin:0 0 0 1px;display:flex">${ic('search',22)}</span></div>
  <div class="tree">
   <div class="row"><svg width="23" height="16"><path d="M7 6l4.500 4 4.500-4" fill="none" stroke="#444" stroke-width="1.800"/><path d="M20 8.500h3" ${dash}/></svg>${ic('hole')}<span style="margin-left:4px">墙洞</span></div>
   ${lv('D-1')}${lv('D-2')}${lv('D-3',1,1)}
  </div>`);
}}
customElements.define('gl-list',GlList);

const PR=[['名称','b','D-3',0],['截面形状','b','异形',1],['洞口宽度(mm)','g','800',1,1],['洞口高度(mm)','g','800',1,1],['离地高度(mm)','k','600',1],['洞口每侧加强筋','b','',1],['斜加筋','s','18Φ18',1],['其它钢筋','b','',0],['加强暗梁高度(mm)','b','',1],['加强暗梁纵筋','b','',1],['加强暗梁箍筋','b','',1],['汇总信息','k','洞口加强筋',1],['备注','k','',1],['显示样式','p','',0]];
class GlProps extends Base{connectedCallback(){
  let rows='';
  PR.forEach((r,i)=>{
    const[n,k,v,chk,gv]=r;const sel=k==='s';
    const col={b:'#0000f0',g:'#8a8a8a',k:'#111',s:'#fff',p:'#8a8a8a'}[k];
    const val=v==='18Φ18'?`<span class="l">18</span><span style="display:inline-block;width:12px;text-align:center;font-weight:700">Φ</span><span class="l">18</span>`:m(v);
    rows+=`<div class="c num ${sel?'hl':''}"><span class="l">${i+1}</span></div>
    <div class="c name ${sel?'sn':''}" style="color:${col}">${k==='p'?`<span class="plus"></span>`:''}<span>${m(n)}</span></div>
    <div class="c val ${sel?'sv':''}" style="${gv?'color:#8a8a8a':''}">${val}</div>
    <div class="c ck ${sel?'sv2':''}">${chk?'<span class="box"></span>':''}</div>`;
  });
  this.shadow(`<style>${SHARED}
  :host{display:flex;flex-direction:column;height:592px;font:12px/16px ${CJK};color:#111;overflow:hidden}
  .tabs{flex:none;height:22px;padding-top:2px;display:flex;background:#f3f3f3}
  .tab{width:59px;height:20px;background:#fff;border:1px solid #d0d0d0;border-bottom:0;padding:2px 0 0 3px}
  .tabs i{flex:1;background:linear-gradient(#f3f3f3 18px,#d0d0d0 18px,#d0d0d0 19px,#fff 19px)}
  .body{flex:1;background:#fff;border:1px solid #b0b0b0;border-top:0;padding:6px 0 0 1px;border-bottom:2px solid #a0a0a0;box-shadow:inset 0 -1px #d8d8d8}
  .tb{display:grid;width:369px;grid-template-columns:21px 190px 126px 31px;grid-template-rows:22px repeat(14,19px);border-left:1px solid #bbb;border-top:1px solid #ddd}
  .c{border-right:1px solid #bdbdbd;border-bottom:1px solid #bdbdbd;display:flex;align-items:center;white-space:nowrap;overflow:hidden}
  .h{background:linear-gradient(#fbfbfb,#ececec);justify-content:center;padding-bottom:2px}
  .hv{background:linear-gradient(#fbdfa8,#f4c56e);color:#7a0a7a;justify-content:center;padding-bottom:2px}
  .num{background:linear-gradient(#fbfbfb,#ebebeb);justify-content:center}
  .hl{background:#fdd08c;color:#7a3a00}
  .name{padding-left:19px;padding-top:2px}
  .sn{background:#0078d7}
  .val{padding-left:2px;padding-top:2px}
  .sv{background:#d6e8f7}
  .sv2{background:#d6e8f7}
  .ck{justify-content:center}
  .box{width:13px;height:13px;border:1px solid #333;background:#fff;display:block}
  .plus{width:11px;height:11px;border:1px solid #777;margin:0 6px 0 -17px;flex:none;background:linear-gradient(#333,#333) center/7px 1px no-repeat,linear-gradient(#333,#333) center/1px 7px no-repeat,#fff}
  </style>
  <div class="tabs"><div class="tab">属性编辑</div><i></i></div>
  <div class="body"><div class="tb">
    <div class="c h"></div><div class="c h">属性名称</div><div class="c hv">属性值</div><div class="c h">附加</div>${rows}
  </div></div>`);
}}
customElements.define('gl-props',GlProps);

class GlStatus extends Base{connectedCallback(){
  const cs=[[150,''],[80,m('层高:4.5m')],[99,m('底标高:-0.05m')],[50,m('0')],[916,m('名称在当前层当前构件类型下不允许重名')],[71,m('827.6 FPS')]];
  this.shadow(`<style>${SHARED}
  :host{display:flex;flex:none;height:20px;background:#f0f0f0;font:12px/16px ${CJK};color:#111;overflow:hidden}
  .c{flex:none;height:18px;margin-top:1px;border:1px solid #fafafa;border-right-color:#d8d8d8;border-bottom-color:#d8d8d8;padding:0 1px;white-space:nowrap;display:flex;align-items:center}
  </style>${cs.map(c=>`<div class="c" style="width:${c[0]}px">${c[1]}</div>`).join('')}`);
}}
customElements.define('gl-status',GlStatus);

class GlOverlay extends Base{connectedCallback(){
  this.shadow(`<style>*{box-sizing:border-box}:host{display:block;position:absolute;left:0;top:0;width:0;height:0}
  .red{position:absolute;left:281px;top:228px;width:389px;height:76px;border:7.500px solid #f00;border-left-width:8px}
  .badge{position:absolute;left:1171px;top:-28px;width:46px;height:46px;border-radius:50%;background:radial-gradient(circle at 50% 65%,#5fd060,#2aa83a);border:2px solid #e8f4e0;box-shadow:0 2px 3px #777;color:#fff;font:bold 12px/14px "Liberation Sans",sans-serif;display:flex;align-items:flex-end;justify-content:center;padding-bottom:3px}
  .sg{position:absolute;left:702px;top:0;display:flex;align-items:flex-start}
  .bar{width:179px;height:24px;margin-top:3px;border:1px solid #b8d0e4;background:#fff;display:flex;align-items:center;padding-left:3px;gap:6px;color:#1c78c8;font:bold 14px/16px "Noto Sans CJK SC",sans-serif}
  .bar span{width:16px;text-align:center;flex:none}
  </style>
  <div class="red"></div>
  <div class="badge">69</div>
  <div class="sg">${ic('sogou',27)}<div class="bar"><span>中</span><span style="font-family:'Liberation Sans'">°,</span>${ic('smile')}${ic('micb')}${ic('kbb')}${ic('pers')}${ic('shirt')}${ic('wrench')}</div></div>`);
}}
customElements.define('gl-overlay',GlOverlay);
</script>
</body></html>
